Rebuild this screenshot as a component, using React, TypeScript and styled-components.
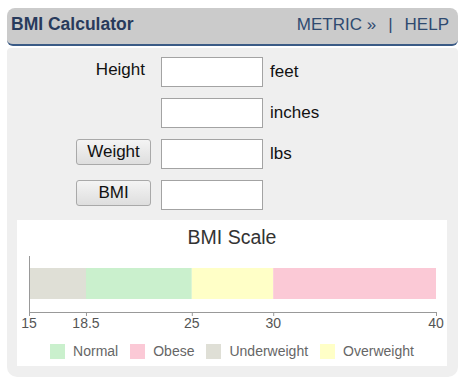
import React from "react";
import styled, { createGlobalStyle } from "styled-components";

const GlobalStyle = createGlobalStyle`
  html, body {
    margin: 0;
    padding: 0;
    background: #ffffff;
    font-family: "Liberation Sans", Arial, sans-serif;
  }
`;

const Widget = styled.div`
  width: 451px;
  margin: 8px 0 0 7px;
  display: flex;
  flex-direction: column;
  gap: 2px;
`;

const Header = styled.div`
  box-sizing: border-box;
  height: 38px;
  display: flex;
  align-items: center;
  justify-content: space-between;
  padding: 0 9px 3px 4px;
  background: #cbcbcb;
  border-bottom: 2px solid #3b5b86;
  border-radius: 8px 8px 6px 6px;
  color: #283a5c;
`;

const Title = styled.div`
  font-size: 17.5px;
  font-weight: bold;
`;

const Nav = styled.div`
  display: flex;
  align-items: center;
  gap: 12px;
  font-size: 17px;
  color: #2f4a70;
`;

const Body = styled.div`
  background: #efefef;
  border-radius: 4px 4px 10px 10px;
  padding: 9px 11px 11px 10px;
  display: flex;
  flex-direction: column;
  gap: 10px;
`;

const FormGrid = styled.div`
  display: grid;
  grid-template-columns: 134px 102px auto;
  grid-auto-rows: 30px;
  column-gap: 10px;
  row-gap: 11px;
  align-items: start;
`;

const Label = styled.div`
  justify-self: end;
  padding: 3px 6px 0 0;
  font-size: 17px;
  color: #111;
`;

const ActionButton = styled.button`
  justify-self: end;
  width: 75px;
  height: 26px;
  padding: 0;
  font-family: "Liberation Sans", Arial, sans-serif;
  font-size: 17px;
  color: #111;
  background: linear-gradient(#f4f4f4, #dedede);
  border: 1px solid #a9a9a9;
  border-radius: 3px;
`;

const Field = styled.input`
  box-sizing: border-box;
  width: 102px;
  height: 30px;
  border: 1px solid #a3a3a3;
  background: #ffffff;
`;

const Unit = styled.div`
  align-self: center;
  font-size: 17px;
  color: #111;
  margin-left: -3px;
`;

const ScalePanel = styled.div`
  background: #ffffff;
  height: 146px;
  display: flex;
  flex-direction: column;
  align-items: center;
`;

const ScaleTitle = styled.div`
  margin-top: 6px;
  height: 22px;
  line-height: 22px;
  font-size: 19.5px;
  color: #333;
`;

const Legend = styled.div`
  margin-top: 9px;
  display: flex;
  gap: 12px;
  font-size: 14px;
  color: #666;
`;

const LegendItem = styled.div`
  display: flex;
  align-items: center;
  gap: 8px;
`;

const Swatch = styled.span<{ color: string }>`
  width: 15px;
  height: 15px;
  background: ${({ color }) => color};
`;

const segments = [
  { from: 15, to: 18.5, color: "#dfdfd6" },
  { from: 18.5, to: 25, color: "#caf0cd" },
  { from: 25, to: 30, color: "#ffffc7" },
  { from: 30, to: 40, color: "#fbc9d6" },
];

const ticks = [15, 18.5, 25, 30, 40];

const legend = [
  { name: "Normal", color: "#caf0cd" },
  { name: "Obese", color: "#fbc9d6" },
  { name: "Underweight", color: "#dfdfd6" },
  { name: "Overweight", color: "#ffffc7" },
];

const x0 = 12;
const x1 = 419;
const scaleX = (v: number) => x0 + ((v - 15) / 25) * (x1 - x0);

const ScaleChart = () => (
  <svg width="430" height="86" viewBox="0 0 430 86">
    {segments.map((s) => (
      <rect key={s.from} x={scaleX(s.from)} y={20} width={scaleX(s.to) - scaleX(s.from)} height={31} fill={s.color} />
    ))}
    <line x1={x0 + 0.5} y1={8} x2={x0 + 0.5} y2={64} stroke="#999" />
    <line x1={x0} y1={64.5} x2={x1} y2={64.5} stroke="#999" />
    {ticks.map((t) => (
      <g key={t}>
        <line x1={scaleX(t) + 0.5} y1={64} x2={scaleX(t) + 0.5} y2={68} stroke="#999" />
        <text
          x={scaleX(t)}
          y={80}
          textAnchor="middle"
          fontSize="14"
          fill="#555"
          fontFamily="Liberation Sans, Arial, sans-serif"
        >
          {t}
        </text>
      </g>
    ))}
  </svg>
);

export default function App() {
  return (
    <>
      <GlobalStyle />
      <Widget>
        <Header>
          <Title>BMI Calculator</Title>
          <Nav>
            <span>METRIC »</span>
            <span>|</span>
            <span>HELP</span>
          </Nav>
        </Header>
        <Body>
          <FormGrid>
            <Label>Height</Label>
            <Field type="text" />
            <Unit>feet</Unit>

            <span />
            <Field type="text" />
            <Unit>inches</Unit>

            <ActionButton type="button">Weight</ActionButton>
            <Field type="text" />
            <Unit>lbs</Unit>

            <ActionButton type="button">BMI</ActionButton>
            <Field type="text" />
            <span />
          </FormGrid>
          <ScalePanel>
            <ScaleTitle>BMI Scale</ScaleTitle>
            <ScaleChart />
            <Legend>
              {legend.map((l) => (
                <LegendItem key={l.name}>
                  <Swatch color={l.color} />
                  {l.name}
                </LegendItem>
              ))}
            </Legend>
          </ScalePanel>
        </Body>
      </Widget>
    </>
  );
}
